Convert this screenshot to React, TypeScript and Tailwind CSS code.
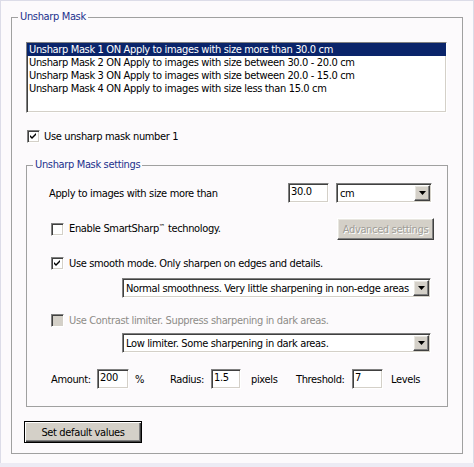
import React from "react";

const sunken =
  "border border-t-[#808080] border-l-[#808080] border-r-white border-b-white shadow-[inset_1px_1px_0_#404040,inset_-1px_-1px_0_#d4d0c8]";
const raised =
  "border border-t-white border-l-white border-r-[#404040] border-b-[#404040] shadow-[inset_-1px_-1px_0_#808080,inset_1px_1px_0_#e8e6e0]";

function Check({ checked, disabled }: { checked?: boolean; disabled?: boolean }) {
  return (
    <div
      className={`w-[13px] h-[13px] shrink-0 ${sunken} ${disabled ? "bg-[#d4d0c8]" : "bg-white"} flex items-center justify-center`}
    >
      {checked && (
        <svg width="11" height="11" viewBox="0 0 11 11" className="block">
          <polygon points="2,4 4,6 8,2 8,4 4,8 2,6" fill="#000" />
        </svg>
      )}
    </div>
  );
}

function TextBox({ value, w }: { value: string; w: string }) {
  return (
    <div className={`${w} h-[20px] shrink-0 bg-white ${sunken} pl-[2px] pt-[1px] leading-[14px]`}>
      {value}
    </div>
  );
}

function Arrow() {
  return (
    <div className={`w-[16px] h-[16px] bg-[#d4d0c8] ${raised} flex items-center justify-center shrink-0`}>
      <svg width="7" height="4" viewBox="0 0 7 4" className="block">
        <polygon points="0,0 7,0 3.5,4" fill="#000" />
      </svg>
    </div>
  );
}

function Select({ text, w, ml }: { text: string; w: string; ml?: string }) {
  return (
    <div className={`${w} ${ml ?? ""} h-[20px] shrink-0 bg-white ${sunken} flex items-center pl-[3px] pr-[1px]`}>
      <span className="flex-1 whitespace-nowrap overflow-hidden">{text}</span>
      <Arrow />
    </div>
  );
}

export default function App() {
  const font = "font-['DejaVu_Sans_Condensed','Liberation_Sans',sans-serif]";
  return (
    <div
      className={`w-[474px] h-[467px] bg-[#fcfafc] text-[11px] leading-[13px] tracking-[-0.35px] text-black ${font} flex flex-col overflow-hidden`}
    >
      <div className="h-[463px] border border-b-0 border-[#dcdce8] pt-[9px] pl-[10px]">
        <fieldset className="w-[452px] h-[444px] border border-[#a0a0a0] min-w-0">
          <legend className="ml-[6px] px-[2px] leading-[14px] text-[#22318c]">Unsharp Mask</legend>

          <div className={`ml-[14px] mt-[18px] w-[421px] h-[71px] bg-white ${sunken}`}>
            <div className="h-[13px] bg-[#0a246a] text-white pl-[2px] whitespace-nowrap">
              Unsharp Mask 1 ON Apply to images with size more than 30.0 cm
            </div>
            <div className="h-[13px] pl-[2px] whitespace-nowrap">
              Unsharp Mask 2 ON Apply to images with size between 30.0 - 20.0 cm
            </div>
            <div className="h-[13px] pl-[2px] whitespace-nowrap">
              Unsharp Mask 3 ON Apply to images with size between 20.0 - 15.0 cm
            </div>
            <div className="h-[13px] pl-[2px] whitespace-nowrap">
              Unsharp Mask 4 ON Apply to images with size less than 15.0 cm
            </div>
          </div>

          <div className="ml-[15px] mt-[17px] h-[13px] flex items-center gap-[4px]">
            <Check checked />
            <span>Use unsharp mask number 1</span>
          </div>

          <fieldset className="ml-[14px] mt-[15px] w-[422px] h-[249px] border border-[#a0a0a0] min-w-0">
            <legend className="ml-[6px] px-[2px] leading-[14px] text-[#22318c]">Unsharp Mask settings</legend>

            <div className="mt-[11px] h-[20px] flex items-center pl-[22px]">
              <span className="w-[239px] shrink-0">Apply to images with size more than</span>
              <TextBox value="30.0" w="w-[41px]" />
              <Select text="cm" w="w-[96px]" ml="ml-[7px]" />
            </div>

            <div className="mt-[15px] h-[22px] flex items-center pl-[24px]">
              <Check />
              <span className="ml-[5px] whitespace-nowrap">
                Enable SmartSharp<span className="relative -top-[3px] text-[7px] tracking-normal">™</span> technology.
              </span>
              <div
                className={`ml-auto mr-[13px] w-[97px] h-[22px] bg-[#d4d0c8] ${raised} flex items-center justify-center text-[#a09e98] [text-shadow:1px_1px_0_#ffffff] whitespace-nowrap`}
              >
                Advanced settings
              </div>
            </div>

            <div className="mt-[16px] h-[14px] flex items-center pl-[24px]">
              <Check checked />
              <span className="ml-[5px]">Use smooth mode. Only sharpen on edges and details.</span>
            </div>

            <div className="mt-[8px] flex">
              <Select
                text="Normal smoothness. Very little sharpening in non-edge areas"
                w="w-[309px]"
                ml="ml-[95px]"
              />
            </div>

            <div className="mt-[15px] h-[14px] flex items-center pl-[24px]">
              <Check disabled />
              <span className="ml-[5px] text-[#8e8c88]">Use Contrast limiter. Suppress sharpening in dark areas.</span>
            </div>

            <div className="mt-[6px] flex">
              <Select text="Low limiter. Some sharpening in dark areas." w="w-[309px]" ml="ml-[95px]" />
            </div>

            <div className="mt-[16px] h-[20px] flex items-center pl-[24px] whitespace-nowrap">
              <span className="w-[46px] shrink-0">Amount:</span>
              <TextBox value="200" w="w-[32px]" />
              <span className="ml-[6px] w-[35px] shrink-0">%</span>
              <span className="w-[41px] shrink-0">Radius:</span>
              <TextBox value="1.5" w="w-[30px]" />
              <span className="ml-[10px] w-[45px] shrink-0">pixels</span>
              <span className="w-[56px] shrink-0">Threshold:</span>
              <TextBox value="7" w="w-[31px]" />
              <span className="ml-[8px]">Levels</span>
            </div>
          </fieldset>

          <div className="ml-[12px] mt-[14px] w-[118px] h-[22px] bg-[#d4d0c8] border border-black shadow-[inset_1px_1px_0_#ffffff,inset_-1px_-1px_0_#404040,inset_-2px_-2px_0_#808080] flex items-center justify-center">
            Set default values
          </div>
        </fieldset>
      </div>
      <div className="h-[4px] bg-[#ecebf4]" />
    </div>
  );
}
